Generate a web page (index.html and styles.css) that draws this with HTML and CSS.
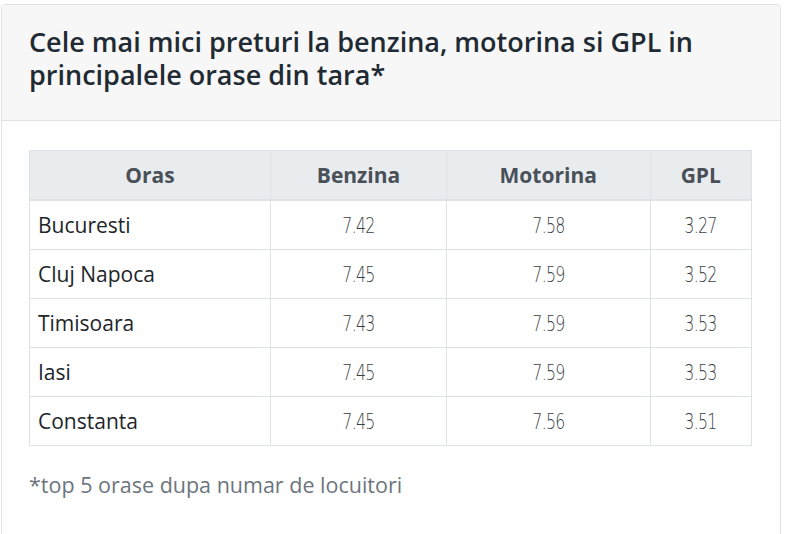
FILE: index.html
```html
<!DOCTYPE html>
<html>
<head>
<meta charset="utf-8">
<link rel="stylesheet" href="styles.css">
</head>
<body>
<div class="card">
  <div class="card-header">
    <h2 class="title">Cele mai mici preturi la benzina, motorina si GPL in principalele orase din tara*</h2>
  </div>
  <div class="card-body">
    <table class="prices">
      <thead>
        <tr><th class="c-city">Oras</th><th class="c-b">Benzina</th><th class="c-m">Motorina</th><th class="c-g">GPL</th></tr>
      </thead>
      <tbody>
        <tr><td class="city">Bucuresti</td><td class="num"><span>7.42</span></td><td class="num"><span>7.58</span></td><td class="num"><span>3.27</span></td></tr>
        <tr><td class="city">Cluj Napoca</td><td class="num"><span>7.45</span></td><td class="num"><span>7.59</span></td><td class="num"><span>3.52</span></td></tr>
        <tr><td class="city">Timisoara</td><td class="num"><span>7.43</span></td><td class="num"><span>7.59</span></td><td class="num"><span>3.53</span></td></tr>
        <tr><td class="city">Iasi</td><td class="num"><span>7.45</span></td><td class="num"><span>7.59</span></td><td class="num"><span>3.53</span></td></tr>
        <tr><td class="city">Constanta</td><td class="num"><span>7.45</span></td><td class="num"><span>7.56</span></td><td class="num"><span>3.51</span></td></tr>
      </tbody>
    </table>
    <p class="note">*top 5 orase dupa numar de locuitori</p>
  </div>
</div>
</body>
</html>
```
FILE: styles.css
```css
html, body {
  margin: 0;
  padding: 0;
  background: #ffffff;
  font-family: "Open Sans", "Noto Sans", sans-serif;
  color: #212529;
}
body {
  padding: 4px 19px 0 1px;
  height: 534px;
  box-sizing: border-box;
  overflow: hidden;
}
.card {
  border: 1px solid #e2e2e2;
  border-radius: 4px;
  background: #fff;
  height: 600px;
}
.card-header {
  background: #f7f7f7;
  border-bottom: 1px solid #e2e2e2;
  padding: 20px 27px 29px 27px;
  border-radius: 4px 4px 0 0;
}
.title {
  margin: 0;
  font-size: 27px;
  font-weight: 600;
  line-height: 33px;
  color: #1f2a33;
}
.card-body {
  padding: 29px 27px 0 27px;
}
.prices {
  border-collapse: collapse;
  width: 723px;
}
.prices th {
  background: #e9ecef;
  color: #495057;
  font-weight: 700;
  font-size: 21px;
  height: 48px;
  border: 1px solid #dee2e6;
  border-bottom: 2px solid #dee2e6;
  text-align: center;
  padding: 0 8px;
}
.c-city { width: 226px; }
.c-b { width: 160px; }
.c-m { width: 188px; }
.c-g { width: 85px; }
.prices td {
  border: 1px solid #dee2e6;
  height: 48px;
  padding: 0 8px;
}
.city {
  font-size: 21px;
  color: #212529;
}
.num {
  text-align: center;
  font-family: "DejaVu Sans", sans-serif;
  font-weight: 200;
  font-size: 22px;
  color: #3a3f44;
}
.num span {
  display: inline-block;
  transform: scaleX(0.72);
  letter-spacing: -1px;
}
.note {
  margin: 24px 0 0 0;
  font-size: 21.5px;
  color: #6c757d;
}
```
